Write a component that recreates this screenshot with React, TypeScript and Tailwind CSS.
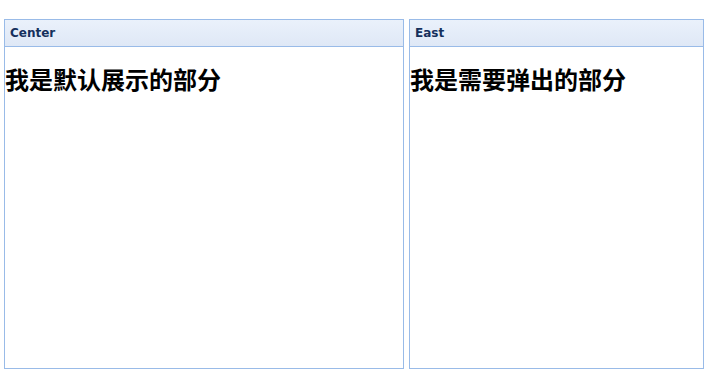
import React from "react";

const Panel = ({ title, text, width }: { title: string; text: string; width: string }) => (
  <div className={`${width} flex flex-col border border-[#99bbe8] bg-white`}>
    <div className="h-[27px] border-b border-[#99bbe8] bg-gradient-to-b from-[#eaf1fb] to-[#dfe8f6] pl-[5px] pt-[6px] text-[12px] leading-[14px] font-bold text-[#15305c] [font-family:'DejaVu_Sans',Tahoma,sans-serif]">
      {title}
    </div>
    <div className="flex-1">
      <h2 className="mt-[18px] text-[24px] leading-[28px] font-bold text-black [font-family:'Noto_Sans_CJK_SC',sans-serif]">
        {text}
      </h2>
    </div>
  </div>
);

export default function App() {
  return (
    <div className="w-[726px] h-[385px] bg-white pt-[19px] pl-[4px]">
      <div className="flex h-[350px] gap-[5px]">
        <Panel title="Center" text="我是默认展示的部分" width="w-[400px]" />
        <Panel title="East" text="我是需要弹出的部分" width="w-[295px]" />
      </div>
    </div>
  );
}
